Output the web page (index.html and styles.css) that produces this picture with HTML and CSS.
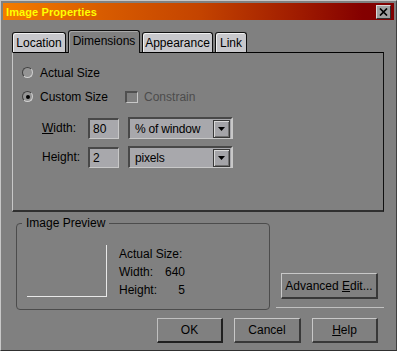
FILE: index.html
```html
<!DOCTYPE html>
<html>
<head>
<meta charset="utf-8">
<link rel="stylesheet" href="styles.css">
</head>
<body>
<div class="window">
  <div class="titlebar">
    <span class="title">Image Properties</span>
    <span class="close"><svg width="9" height="8" viewBox="0 0 9 8"><path d="M1 0.5 L8 7.5 M8 0.5 L1 7.5" stroke="#000" stroke-width="1.7" fill="none"/></svg></span>
  </div>
  <div class="tabs">
    <div class="tab t-loc">Location</div>
    <div class="tab active t-dim">Dimensions</div>
    <div class="tab t-app">Appearance</div>
    <div class="tab t-link">Link</div>
  </div>
  <div class="panel">
    <div class="row r1"><span class="radio"></span><span class="lbl">Actual Size</span></div>
    <div class="row r2"><span class="radio on"><span class="dot"></span></span><span class="lbl">Custom Size</span><span class="check"></span><span class="lbl disabled">Constrain</span></div>
    <div class="field f1">
      <span class="flabel"><u>W</u>idth:</span>
      <span class="input">80</span>
      <span class="select"><span class="sel-text">% of window</span><span class="arrow"><svg width="7" height="4" viewBox="0 0 7 4"><path d="M0 0 H7 L3.5 4 Z" fill="#000"/></svg></span></span>
    </div>
    <div class="field f2">
      <span class="flabel">Hei<u>g</u>ht:</span>
      <span class="input">2</span>
      <span class="select"><span class="sel-text">pixels</span><span class="arrow"><svg width="7" height="4" viewBox="0 0 7 4"><path d="M0 0 H7 L3.5 4 Z" fill="#000"/></svg></span></span>
    </div>
  </div>
  <div class="lower">
    <fieldset class="group">
      <legend>Image Preview</legend>
      <div class="preview-body">
        <div class="preview-box"></div>
        <div class="info">
          <span class="info-head">Actual Size:</span>
          <span>Width:</span><span class="val">640</span>
          <span>Height:</span><span class="val">5</span>
        </div>
      </div>
    </fieldset>
    <div class="side">
      <button class="btn adv">Advanced <u>E</u>dit...</button>
      <div class="sep"></div>
    </div>
  </div>
  <div class="buttons">
    <button class="btn ok">OK</button>
    <button class="btn cancel">Cancel</button>
    <button class="btn help"><u>H</u>elp</button>
  </div>
</div>
</body>
</html>
```

FILE: styles.css
```css
html, body {
  margin: 0;
  padding: 0;
  background: #808080;
}
body {
  font-family: "Liberation Sans", Arial, sans-serif;
  font-size: 12px;
  color: #000;
}
.window {
  box-sizing: border-box;
  width: 397px;
  height: 351px;
  border: 1px solid;
  border-color: #c8c8c8 #404040 #303030 #c8c8c8;
  padding: 2px;
  background: #808080;
  display: flex;
  flex-direction: column;
  overflow: hidden;
}
.titlebar {
  height: 17px;
  flex: none;
  display: flex;
  align-items: center;
  justify-content: space-between;
  padding: 0 3px 0 3px;
  background: linear-gradient(to right, #f47c00 0%, #d85c00 25%, #c44400 50%, #a01c00 75%, #840000 92%, #800000 100%);
}
.title {
  color: #ffff00;
  font-weight: bold;
  font-size: 11px;
  letter-spacing: 0.1px;
}
.close {
  box-sizing: border-box;
  width: 15px;
  height: 14px;
  background: #a0a0a0;
  border: 1px solid;
  border-color: #d8d8d8 #303030 #303030 #d8d8d8;
  display: flex;
  align-items: center;
  justify-content: center;
}
.tabs {
  display: flex;
  align-items: flex-end;
  gap: 2px;
  margin: 10px 0 0 9px;
  height: 22px;
  flex: none;
}
.tab {
  box-sizing: border-box;
  height: 20px;
  padding: 0 4px;
  display: flex;
  align-items: center;
  justify-content: center;
  background: #c8c8cc;
  border: 1px solid #101010;
  border-bottom: none;
  border-radius: 3px 3px 0 0;
  box-shadow: inset 1px 1px 0 #f0f0f0;
}
.t-loc { width: 54px; }
.t-dim { width: 72px; }
.t-app { width: 71px; }
.t-link { width: 32px; }
.tab.active {
  height: 23px;
  margin-bottom: -1px;
  background: #808080;
  position: relative;
  z-index: 1;
  box-shadow: inset 1px 1px 0 #a8a8a8;
  padding-bottom: 2px;
}
.panel {
  box-sizing: border-box;
  height: 160px;
  margin: 0 10px 0 9px;
  border: 1px solid;
  border-color: #000 #101010 #303030 #c8c8c8;
  border-bottom-width: 2px;
  padding: 9px 0 0 9px;
  flex: none;
}
.row {
  display: flex;
  align-items: center;
  height: 21px;
}
.r2 { margin-top: 3px; }
.radio {
  box-sizing: border-box;
  width: 11px;
  height: 11px;
  border-radius: 50%;
  border: 1px solid;
  border-color: #404040 #d0d0d0 #d0d0d0 #404040;
  background: #949494;
  display: flex;
  align-items: center;
  justify-content: center;
  margin-right: 7px;
}
.dot {
  width: 4px;
  height: 4px;
  border-radius: 50%;
  background: #000;
}
.check {
  box-sizing: border-box;
  width: 13px;
  height: 12px;
  border: 1px solid;
  border-width: 2px 1px 1px 2px;
  border-color: #505050 #c8c8c8 #c8c8c8 #505050;
  margin: 0 6px 0 17px;
}
.disabled { color: #4c4c4c; }
.field {
  display: flex;
  align-items: center;
  margin-left: 20px;
  height: 22px;
}
.f1 { margin-top: 10px; }
.f2 { margin-top: 7px; }
.flabel {
  width: 46px;
}
.input {
  box-sizing: border-box;
  width: 31px;
  height: 21px;
  background: #a8a8ac;
  border-style: solid;
  border-width: 2px 1px 1px 2px;
  border-color: #484848 #c8c8c8 #c8c8c8 #484848;
  padding-left: 3px;
  display: flex;
  align-items: center;
}
.select {
  box-sizing: border-box;
  width: 105px;
  height: 22px;
  margin-left: 9px;
  background: #a8a8ac;
  border-style: solid;
  border-width: 2px 2px 1px 2px;
  border-color: #484848 #c8c8c8 #c8c8c8 #484848;
  display: flex;
  align-items: center;
  padding: 0 1px 0 5px;
}
.sel-text {
  flex: 1;
  letter-spacing: -0.2px;
}
.arrow {
  box-sizing: border-box;
  width: 17px;
  height: 18px;
  background: #a4a4a8;
  border: 1px solid #383838;
  box-shadow: inset 1px 1px 0 #d8d8d8, inset -1px -1px 0 #707070;
  display: flex;
  align-items: center;
  justify-content: center;
}
.lower {
  display: flex;
  align-items: flex-end;
  margin-top: 4px;
  flex: none;
}
.group {
  box-sizing: border-box;
  width: 254px;
  margin: 0 0 0 13px;
  padding: 15px 0 10px 10px;
  border: 1px solid #4c4c4c;
  border-radius: 4px;
  min-width: 0;
}
.group legend {
  padding: 0 4px;
  margin-left: -5px;
  line-height: 14px;
}
.preview-body {
  display: flex;
  align-items: flex-start;
}
.preview-box {
  width: 79px;
  height: 51px;
  border-right: 1px solid #e8e8e8;
  border-bottom: 1px solid #e8e8e8;
}
.info {
  display: grid;
  grid-template-columns: auto 1fr;
  width: 66px;
  margin-left: 12px;
  line-height: 18px;
}
.info-head { grid-column: 1 / 3; }
.val { text-align: right; }
.side {
  display: flex;
  flex-direction: column;
  width: 108px;
  margin: 0 0 2px 6px;
}
.btn {
  box-sizing: border-box;
  font-family: "Liberation Sans", Arial, sans-serif;
  font-size: 12px;
  color: #000;
  background: #808080;
  border-style: solid;
  border-width: 1px 2px 2px 1px;
  border-color: #c8c8c8 #383838 #383838 #c8c8c8;
  padding: 0;
  height: 26px;
  margin: 0;
}
.adv {
  width: 97px;
  margin-left: 5px;
}
.sep {
  height: 1px;
  background: #c0c0c0;
  margin-top: 8px;
}
.buttons {
  display: flex;
  justify-content: flex-end;
  gap: 11px;
  margin: 8px 16px 0 0;
  flex: none;
}
.buttons .btn { height: 25px; width: 66px; }
.buttons .cancel { width: 67px; }
.buttons .ok { border-color: #c0c0c0 #202020 #202020 #c0c0c0; }
```
